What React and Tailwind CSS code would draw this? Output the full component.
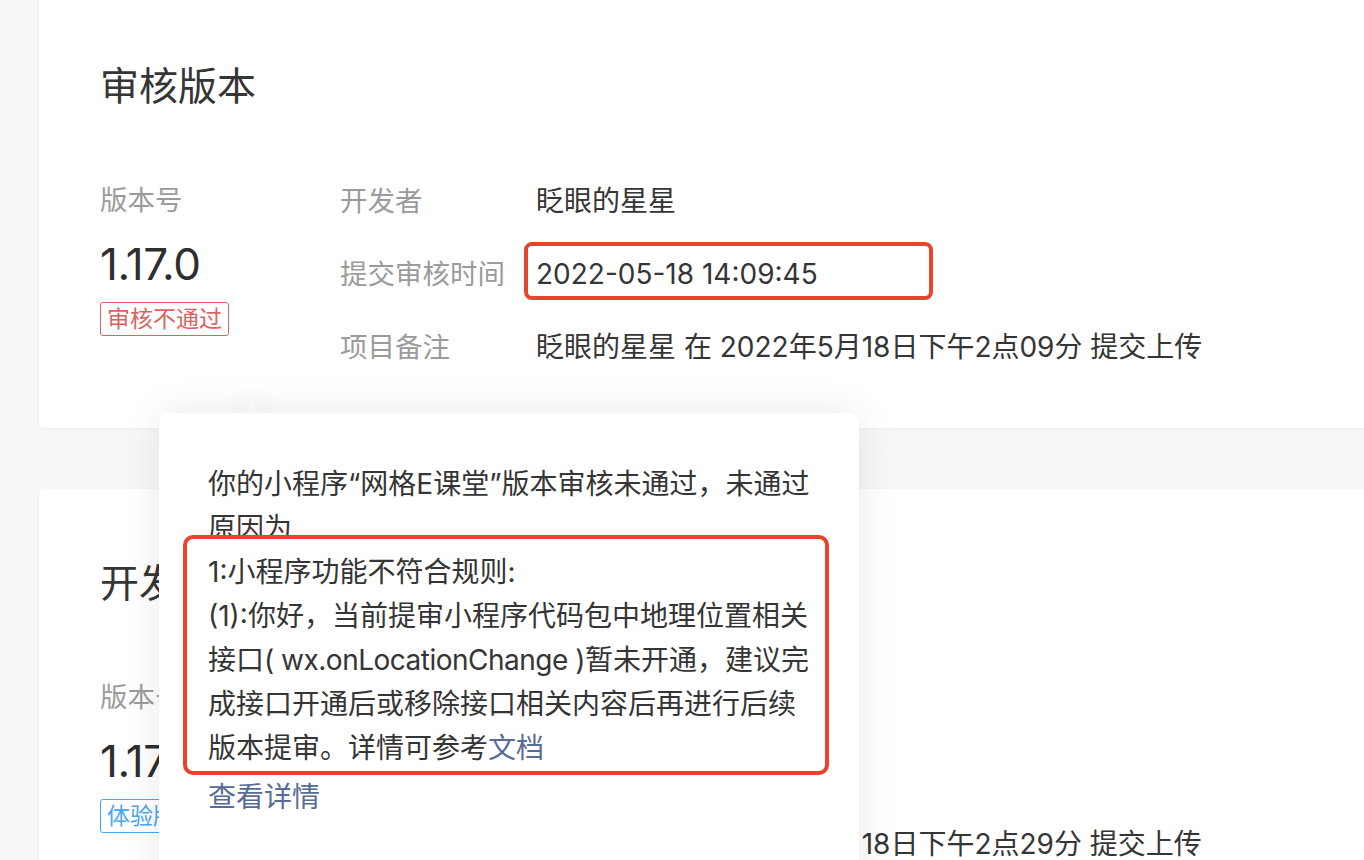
import React from "react";

function Row({ label, children }) {
  return (
    <div className="flex h-[73px] items-center">
      <div className="w-[196px] shrink-0 text-[27.5px] leading-[40px] text-[#9b9b9b]">{label}</div>
      <div className="relative text-[28px] leading-[40px] text-[#353535] whitespace-nowrap">{children}</div>
    </div>
  );
}

function Card({ title, tag, tagClass, rows, className }) {
  return (
    <div className={"w-[1400px] bg-white rounded-[6px] pl-[61px] pt-[69px] pb-[45px] shadow-[0_1px_3px_rgba(0,0,0,0.04)] " + className}>
      <div className="text-[39px] leading-[50px] text-[#353535]">{title}</div>
      <div className="mt-[53px] flex">
        <div className="w-[240px] shrink-0 flex flex-col items-start">
          <div className="h-[73px] flex items-center text-[27.5px] text-[#9b9b9b]">版本号</div>
          <div className="mt-[2px] text-[44px] leading-[50px] text-[#2e2e2e] tracking-[-0.5px]">1.17.0</div>
          <div className={"mt-[13px] h-[34px] px-[6px] flex items-center rounded-[3px] border-[1.5px] text-[23px] leading-[30px] " + tagClass}>{tag}</div>
        </div>
        <div className="flex flex-col">{rows}</div>
      </div>
    </div>
  );
}

export default function App() {
  return (
    <div className="relative w-[1364px] h-[860px] overflow-hidden bg-[#f6f7f9] font-['Inter','Noto_Sans_CJK_SC',sans-serif]">
      <div className="pl-[39px] flex flex-col">
        <Card
          className="-mt-[8px]"
          title="审核版本"
          tag="审核不通过"
          tagClass="border-[#d96363] text-[#d96363]"
          rows={
            <>
              <Row label="开发者">眨眼的星星</Row>
              <Row label="提交审核时间">
                <div className="absolute left-[-12px] top-[-12px] w-[409px] h-[58px] rounded-[8px] border-[4px] border-[#e8432d]" />
                2022-05-18 14:09:45
              </Row>
              <Row label="项目备注">眨眼的星星 在 2022年5月18日下午2点09分 提交上传</Row>
            </>
          }
        />
        <Card
          className="mt-[61px]"
          title="开发版本"
          tag="体验版"
          tagClass="border-[#47a6f2] text-[#47a6f2]"
          rows={
            <>
              <Row label="开发者">眨眼的星星</Row>
              <Row label="提交时间">2022-05-18 14:29:12</Row>
              <Row label="项目备注">眨眼的星星 在 2022年5月18日下午2点29分 提交上传</Row>
            </>
          }
        />
      </div>

      {/* popover */}
      <div className="absolute left-[159px] top-[413px] w-[700px] h-[520px]">
        <div className="absolute left-[85px] top-[-8px] w-[16px] h-[16px] rotate-45 bg-white shadow-[0_0_24px_rgba(0,0,0,0.1)]" />
        <div className="absolute inset-0 rounded-[10px] bg-white shadow-[0_0_40px_rgba(0,0,0,0.09)]" />
        <div className="absolute left-[80px] top-0 w-[26px] h-[14px] bg-white" />
        <div className="relative pl-[49px] pt-[49px] text-[28px] leading-[44px] text-[#353535] whitespace-nowrap">
          <div>你的小程序“网格E课堂”版本审核未通过，未通过</div>
          <div>原因为</div>
          <div className="relative">
            <div className="absolute left-[-25px] top-[-15px] w-[646px] h-[240px] rounded-[10px] border-[4px] border-[#e8432d] bg-white" />
            <div className="relative">1:小程序功能不符合规则:</div>
            <div className="relative">(1):你好，当前提审小程序代码包中地理位置相关</div>
            <div className="relative">
              接口<span className="tracking-[-0.5px]">( wx.onLocationChange )</span>暂未开通，建议完
            </div>
            <div className="relative">成接口开通后或移除接口相关内容后再进行后续</div>
            <div className="relative">
              版本提审。详情可参考<span className="text-[#576b95]">文档</span>
            </div>
          </div>
          <div className="mt-[5px] text-[#576b95]">查看详情</div>
        </div>
      </div>
    </div>
  );
}
